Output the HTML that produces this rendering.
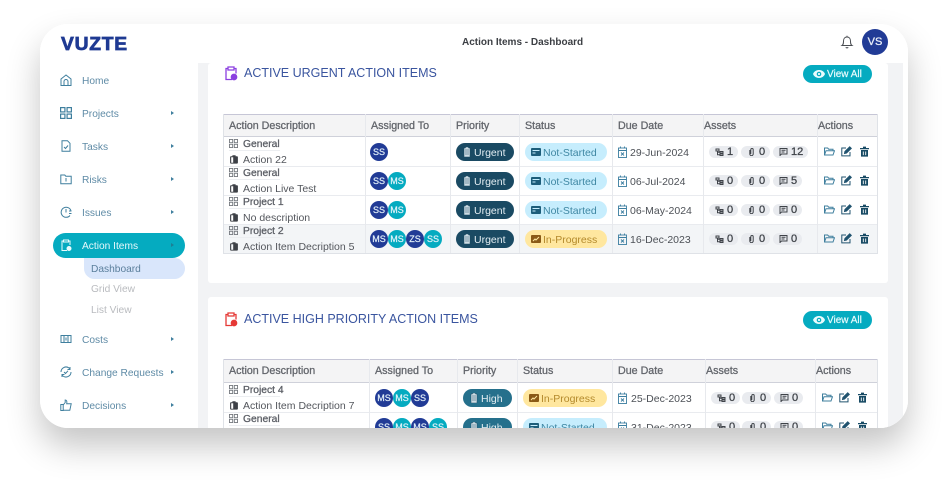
<!DOCTYPE html>
<html><head><meta charset="utf-8"><style>
*{box-sizing:border-box}
html,body{margin:0;padding:0;width:948px;height:484px;background:#fff;overflow:hidden;font-family:"Liberation Sans",sans-serif}
#f{position:absolute;left:40px;top:24px;width:868px;height:404px;border-radius:28px;overflow:hidden;background:#fff}
#s{position:absolute;left:40px;top:24px;width:868px;height:404px;border-radius:28px;box-shadow:0 18px 34px rgba(0,0,0,.23)}
.a{position:absolute;white-space:nowrap}
.n{position:absolute;left:42px;margin-top:1px;font-size:10.2px;line-height:14px;color:#5f8ba6;white-space:nowrap}
svg{position:absolute;display:block;overflow:visible}
.ni{left:20px;width:12px;height:12px;fill:none;stroke:#3f7f9e;stroke-width:1}
.ar{position:absolute;left:131px;width:0;height:0;border-left:3px solid #3f7f9e;border-top:2.5px solid transparent;border-bottom:2.5px solid transparent}
.card{position:absolute;left:168px;width:680px;background:#fff;border-radius:3px;overflow:hidden}
.h2{position:absolute;left:36px;font-size:12.5px;line-height:16px;color:#3a559f;white-space:nowrap}
.va{position:absolute;left:595px;width:69px;height:18px;border-radius:9px;background:#05abc0;color:#e8fbfd;font-size:10px;-webkit-text-stroke:.2px #e8fbfd;line-height:19px;padding-left:24px}
.va svg{left:10px;top:5px;width:12px;height:8px}
.tb{position:absolute;left:15px;width:655px;border:1px solid #dfe2e7;border-top:0}
.hd{position:absolute;left:0;top:0;width:653px;height:23px;background:#f4f4f5;border-top:1px solid #c6c6d6;border-bottom:1.5px solid #cfd1da}
.hd span{position:absolute;top:4px;font-size:10.7px;line-height:14px;-webkit-text-stroke:.3px #63666c;color:#63666c;white-space:nowrap}
.v{position:absolute;top:0;width:1px;background:#e7e9ed}
.r{position:absolute;left:0;width:653px;height:30px;border-bottom:1.5px solid #e9ebef}
.t1{position:absolute;left:19px;margin-top:1px;font-size:10.3px;line-height:13px;-webkit-text-stroke:.3px #5c5f66;color:#5c5f66;white-space:nowrap}
.t2{position:absolute;left:19px;margin-top:1px;font-size:10.5px;line-height:13px;color:#53565c;white-space:nowrap}
.ul{position:absolute;left:5px;top:13px;width:51px;height:1px;background:#eceef1}
.g{left:5px;top:2px;width:9px;height:9px;fill:none;stroke:#767a80;stroke-width:1}
.c{left:6px;top:18px;width:8px;height:9px;fill:#3d4046}
.u{position:absolute;top:6px;width:18px;height:18px;border-radius:50%;color:#e6f3fa;font-size:9px;-webkit-text-stroke:.2px #e6f3fa;line-height:18px;text-align:center}
.b{background:#213b96}.l{background:#05abc0}
.p{position:absolute;top:6px;height:18px;border-radius:9px;color:#e3eef3;font-size:10.5px;line-height:20px;white-space:nowrap}
.p svg{left:7px;top:4px;width:8px;height:10px;fill:#cfdde4}
.ns{background:#c6edfd;color:#3f87a3}.ip{background:#ffe79f;color:#b48a2c}
.p svg.st{left:6px;top:5px;width:10px;height:8px}
.dt{position:absolute;top:6px;font-size:10.5px;line-height:20px;color:#4d5157;white-space:nowrap}
.cal{top:9px;width:9px;height:12px;fill:none;stroke:#3a7d9f;stroke-width:.9}
.ch{position:absolute;top:9px;height:12px;border-radius:6px;background:#e9ebef;color:#41454b;font-size:11px;line-height:13px;white-space:nowrap}
.ch svg{top:2px;left:6px;width:9px;height:8px;fill:none;stroke:#3f4349;stroke-width:1}
.ch b{position:absolute;left:18px;top:0;font-weight:normal;-webkit-text-stroke:.3px #41454b}
.ic{top:9px;width:11px;height:11px;fill:none;stroke:#21536f;stroke-width:1}
.fo{stroke:#3f7f9e}
</style></head><body>
<svg width="0" height="0" style="position:absolute"><defs>
<symbol id="grid" viewBox="0 0 10 10"><rect x=".5" y=".5" width="3.6" height="3.6"/><rect x="5.9" y=".5" width="3.6" height="3.6"/><rect x=".5" y="5.9" width="3.6" height="3.6"/><rect x="5.9" y="5.9" width="3.6" height="3.6"/></symbol>
<symbol id="clip" viewBox="0 0 8 9"><path d="M1 1.200h1.400V.3h3.200v.9H7a.9.9 0 0 1 .9.9v5.600a.9.9 0 0 1-.9.9H1a.9.9 0 0 1-.9-.9V2.100a.9.9 0 0 1 .9-.9zM1.200 2.300V7.800h2V2.300z"/></symbol>
<symbol id="cal" viewBox="0 0 9 12"><rect x=".5" y="2" width="8" height="9.500"/><path d="M.5 4.500h8M2.500.5v2M6.500.5v2M3 6.500l3 3M6 6.500l-3 3"/></symbol>
<symbol id="sub" viewBox="0 0 8 8"><path d="M.5 1h3v2h-3zM4.500 3.500h3v1.500h-3zM4.500 6h3v1.500h-3zM2 3v3.700h2.500M2 4.200h2.500"/></symbol>
<symbol id="pin" viewBox="0 0 8 8"><path d="M2.300 2v4a1.700 1.700 0 0 0 3.400 0V1.700a1.200 1.200 0 0 0-2.400 0V6"/></symbol>
<symbol id="msg" viewBox="0 0 8 8"><path d="M.5.500h7v5.500H2L.5 7.500zM2 2.300h4M2 4h3"/></symbol>
<symbol id="fold" viewBox="0 0 11 11"><path d="M.5 9V2h3.200l1 1.200H9v1.500M.5 9l1.500-4.300h8.500L9 9z"/></symbol>
<symbol id="edit" viewBox="0 0 11 11"><path d="M9 6v3.900H.8V2H5"/><path d="M3.500 7.500l.4-2L8.700.8l1.600 1.600-4.800 4.700z" fill="#21536f"/></symbol>
<symbol id="trash" viewBox="0 0 11 11"><path d="M1 2h3V.6h3V2h3v1.300H1zM2 4h7v6.600H2z" fill="#174a64" stroke="none"/><path d="M4.300 5.500v3.600M6.700 5.500v3.600" stroke="#fff" stroke-width=".9"/></symbol>
<symbol id="urg" viewBox="0 0 8 10"><path d="M2.500 0h3v1H7v9H1V1h1.500zM2 3h4M2 5h4M2 7h4" stroke="#1a4a63" stroke-width=".5"/></symbol>
<symbol id="card" viewBox="0 0 10 8"><rect width="10" height="8" rx="1" fill="#1c5d7a"/><path d="M1.500 2.500h7M1.500 5h3" stroke="#c6edfd"/></symbol>
<symbol id="prog" viewBox="0 0 10 8"><rect width="10" height="8" rx="1" fill="#8a5a16"/><path d="M2 6l2-2 1 1 3-3" stroke="#ffe79f" fill="none"/></symbol>
<symbol id="eye" viewBox="0 0 12 8"><path d="M0 4c2-5.300 10-5.300 12 0-2 5.300-10 5.300-12 0z" fill="#e8fbfd"/><circle cx="6" cy="4" r="2.300" fill="#05abc0"/><circle cx="6" cy="4" r="1.100" fill="#e8fbfd"/></symbol>
</defs></svg>
<div id="s"></div>
<div id="f">
 <div class="a" style="left:158px;top:39px;width:710px;height:365px;background:#f2f3f5"></div>
 <div class="a" style="left:863px;top:39px;width:5px;height:365px;background:#fff"></div>
 <div class="a" style="left:0;top:0;width:868px;height:39px;background:#fff"></div>
 <div class="a" style="left:21px;top:11px;font-size:18px;line-height:18px;font-weight:bold;color:#1f3a93;letter-spacing:.7px;-webkit-text-stroke:.7px #1f3a93;transform:scaleX(1.07);transform-origin:0 50%">VUZTE</div>
 <div class="a" style="left:422px;top:12px;font-size:10px;line-height:14px;font-weight:bold;color:#3c3f44">Action Items - Dashboard</div>
 <svg style="left:801px;top:11px;width:12px;height:14px" viewBox="0 0 12 14" fill="none" stroke="#4a4d52" stroke-width="1"><path d="M1 10.500c1.500-1 1.500-2.500 1.500-4.500C2.500 3.500 4 2 6 2s3.500 1.500 3.500 4c0 2 0 3.500 1.500 4.500zM6 .8V2M4.800 12.300c.5.800 1.900.8 2.400 0"/></svg>
 <div class="a" style="left:822px;top:5px;width:26px;height:26px;border-radius:50%;background:#213b96;color:#e9eef9;font-size:11px;-webkit-text-stroke:.3px #e9eef9;line-height:27px;text-align:center">VS</div>

 <div class="a" style="left:13px;top:209px;width:132px;height:25px;border-radius:13px;background:#05abc0"></div>
 <div class="a" style="left:44px;top:234px;width:101px;height:21px;border-radius:0 11px 11px 11px;background:#d9e6fb"></div>
 <svg class="ni" style="top:50px" viewBox="0 0 12 12"><path d="M1 5l5-4 5 4v6.500H1zM4 11.500V7.500a2 2 0 0 1 4 0v4"/></svg>
 <div class="n" style="top:50px">Home</div>
 <svg class="ni" style="top:83px" viewBox="0 0 10 10"><use href="#grid"/></svg>
 <div class="n" style="top:83px">Projects</div><div class="ar" style="top:87px"></div>
 <svg class="ni" style="top:116px" viewBox="0 0 12 12"><path d="M2 .8h5.500L10 3.300v8H2zM4 7l1.500 1.500L8 5.500"/></svg>
 <div class="n" style="top:116px">Tasks</div><div class="ar" style="top:120px"></div>
 <svg class="ni" style="top:149px" viewBox="0 0 12 12"><path d="M.8 2h4l1 1.200h5.400v7.600H.8zM6 5v3.500"/></svg>
 <div class="n" style="top:149px">Risks</div><div class="ar" style="top:153px"></div>
 <svg class="ni" style="top:182px" viewBox="0 0 12 12"><path d="M10 9.500A5 5 0 1 1 11 5M6 3v3.500M9 5h2.500M9 7.500h2.500"/></svg>
 <div class="n" style="top:182px">Issues</div><div class="ar" style="top:186px"></div>
 <svg class="ni" style="top:215px;stroke:#e9fbfd" viewBox="0 0 12 12"><path d="M3.500 2H2v9.500h5M8.500 2H10v4M3.500 1h5v2h-5z"/><circle cx="9" cy="9.500" r="2" fill="#e9fbfd"/></svg>
 <div class="n" style="top:215px;color:#e6f8fb">Action Items</div><div class="ar" style="top:219px;border-left-color:#1d7f94"></div>
 <div class="n" style="left:51px;top:238px;color:#5b7f9c">Dashboard</div>
 <div class="n" style="left:51px;top:258px;color:#b9bbbf">Grid View</div>
 <div class="n" style="left:51px;top:279px;color:#b9bbbf">List View</div>
 <svg class="ni" style="top:309px" viewBox="0 0 12 12"><path d="M1 2.500h10v7H1zM4 2.500v7M8 2.500v7M6 4.500v3"/></svg>
 <div class="n" style="top:309px">Costs</div><div class="ar" style="top:313px"></div>
 <svg class="ni" style="top:342px" viewBox="0 0 12 12"><path d="M1 6a5 5 0 0 1 8-4l1 1M11 6a5 5 0 0 1-8 4L2 9M10 1v2.500H7.500M2 11V8.500h2.500M4 6l1.500 1.500L8 4.800"/></svg>
 <div class="n" style="top:342px">Change Requests</div><div class="ar" style="top:346px"></div>
 <svg class="ni" style="top:375px" viewBox="0 0 12 12"><path d="M.8 5.500h2.400v6H.8zM3.200 6l2-2.500V1c1.500 0 2 1.500 1.500 3.800h4.500L9.800 11.300H3.200"/></svg>
 <div class="n" style="top:375px">Decisions</div><div class="ar" style="top:379px"></div>

 <div class="card" style="top:39px;height:220px">
  <svg style="left:17px;top:3px;width:12px;height:14px;fill:none;stroke:#8b3fe0;stroke-width:1.300" viewBox="0 0 12 14"><path d="M3 2.500H1v11h6M9 2.500h2v5M3 1h6v3H3z"/><circle cx="9" cy="11" r="2.700" fill="#8b3fe0"/></svg>
  <div class="h2" style="top:2px">ACTIVE URGENT ACTION ITEMS</div>
  <div class="va" style="top:2px"><svg viewBox="0 0 12 8"><use href="#eye"/></svg>View All</div>
  <div class="tb" style="top:51px;height:140px">
   <div class="hd"><span style="left:5px">Action Description</span><span style="left:147px">Assigned To</span><span style="left:232px">Priority</span><span style="left:301px">Status</span><span style="left:394px">Due Date</span><span style="left:480px">Assets</span><span style="left:594px">Actions</span></div>
   <div class="r" style="top:23px">
    <svg class="g" viewBox="0 0 10 10"><use href="#grid"/></svg><div class="t1" style="top:0">General</div><div class="ul"></div>
    <svg class="c" viewBox="0 0 8 9"><use href="#clip"/></svg><div class="t2" style="top:16px">Action 22</div>
    <div class="u b" style="left:146px">SS</div>
    <div class="p" style="left:232px;width:58px;padding-left:18px;background:#1a4a63"><svg viewBox="0 0 8 10"><use href="#urg"/></svg>Urgent</div>
    <div class="p ns" style="left:301px;width:82px;padding-left:18px"><svg class="st" viewBox="0 0 10 8"><use href="#card"/></svg>Not-Started</div>
    <svg class="cal" style="left:394px" viewBox="0 0 9 12"><use href="#cal"/></svg><div class="dt" style="left:406px">29-Jun-2024</div>
    <div class="ch" style="left:485px;width:29px"><svg viewBox="0 0 8 8"><use href="#sub"/></svg><b>1</b></div>
    <div class="ch" style="left:517px;width:29px"><svg viewBox="0 0 8 8"><use href="#pin"/></svg><b>0</b></div>
    <div class="ch" style="left:549px;width:35px"><svg viewBox="0 0 8 8"><use href="#msg"/></svg><b>12</b></div>
    <svg class="ic fo" style="left:600px" viewBox="0 0 11 11"><use href="#fold"/></svg><svg class="ic" style="left:617px" viewBox="0 0 11 11"><use href="#edit"/></svg><svg class="ic" style="left:635px" viewBox="0 0 11 11"><use href="#trash"/></svg>
   </div>
   <div class="r" style="top:52px">
    <svg class="g" viewBox="0 0 10 10"><use href="#grid"/></svg><div class="t1" style="top:0">General</div><div class="ul"></div>
    <svg class="c" viewBox="0 0 8 9"><use href="#clip"/></svg><div class="t2" style="top:16px">Action Live Test</div>
    <div class="u b" style="left:146px">SS</div><div class="u l" style="left:164px">MS</div>
    <div class="p" style="left:232px;width:58px;padding-left:18px;background:#1a4a63"><svg viewBox="0 0 8 10"><use href="#urg"/></svg>Urgent</div>
    <div class="p ns" style="left:301px;width:82px;padding-left:18px"><svg class="st" viewBox="0 0 10 8"><use href="#card"/></svg>Not-Started</div>
    <svg class="cal" style="left:394px" viewBox="0 0 9 12"><use href="#cal"/></svg><div class="dt" style="left:406px">06-Jul-2024</div>
    <div class="ch" style="left:485px;width:29px"><svg viewBox="0 0 8 8"><use href="#sub"/></svg><b>0</b></div>
    <div class="ch" style="left:517px;width:29px"><svg viewBox="0 0 8 8"><use href="#pin"/></svg><b>0</b></div>
    <div class="ch" style="left:549px;width:29px"><svg viewBox="0 0 8 8"><use href="#msg"/></svg><b>5</b></div>
    <svg class="ic fo" style="left:600px" viewBox="0 0 11 11"><use href="#fold"/></svg><svg class="ic" style="left:617px" viewBox="0 0 11 11"><use href="#edit"/></svg><svg class="ic" style="left:635px" viewBox="0 0 11 11"><use href="#trash"/></svg>
   </div>
   <div class="r" style="top:81px">
    <svg class="g" viewBox="0 0 10 10"><use href="#grid"/></svg><div class="t1" style="top:0">Project 1</div><div class="ul"></div>
    <svg class="c" viewBox="0 0 8 9"><use href="#clip"/></svg><div class="t2" style="top:16px">No description</div>
    <div class="u b" style="left:146px">SS</div><div class="u l" style="left:164px">MS</div>
    <div class="p" style="left:232px;width:58px;padding-left:18px;background:#1a4a63"><svg viewBox="0 0 8 10"><use href="#urg"/></svg>Urgent</div>
    <div class="p ns" style="left:301px;width:82px;padding-left:18px"><svg class="st" viewBox="0 0 10 8"><use href="#card"/></svg>Not-Started</div>
    <svg class="cal" style="left:394px" viewBox="0 0 9 12"><use href="#cal"/></svg><div class="dt" style="left:406px">06-May-2024</div>
    <div class="ch" style="left:485px;width:29px"><svg viewBox="0 0 8 8"><use href="#sub"/></svg><b>0</b></div>
    <div class="ch" style="left:517px;width:29px"><svg viewBox="0 0 8 8"><use href="#pin"/></svg><b>0</b></div>
    <div class="ch" style="left:549px;width:29px"><svg viewBox="0 0 8 8"><use href="#msg"/></svg><b>0</b></div>
    <svg class="ic fo" style="left:600px" viewBox="0 0 11 11"><use href="#fold"/></svg><svg class="ic" style="left:617px" viewBox="0 0 11 11"><use href="#edit"/></svg><svg class="ic" style="left:635px" viewBox="0 0 11 11"><use href="#trash"/></svg>
   </div>
   <div class="r" style="top:111px;height:28px;background:#f3f5f7;border-bottom:0">
    <svg class="g" style="top:1px" viewBox="0 0 10 10"><use href="#grid"/></svg><div class="t1" style="top:-1px">Project 2</div><div class="ul" style="top:12px"></div>
    <svg class="c" style="top:17px" viewBox="0 0 8 9"><use href="#clip"/></svg><div class="t2" style="top:15px">Action Item Decription 5</div>
    <div class="u b" style="left:146px;top:5px">MS</div><div class="u l" style="left:164px;top:5px">MS</div><div class="u b" style="left:182px;top:5px">ZS</div><div class="u l" style="left:200px;top:5px">SS</div>
    <div class="p" style="left:232px;top:5px;width:58px;padding-left:18px;background:#1a4a63"><svg viewBox="0 0 8 10"><use href="#urg"/></svg>Urgent</div>
    <div class="p ip" style="left:301px;top:5px;width:82px;padding-left:18px"><svg class="st" viewBox="0 0 10 8"><use href="#prog"/></svg>In-Progress</div>
    <svg class="cal" style="left:394px;top:8px" viewBox="0 0 9 12"><use href="#cal"/></svg><div class="dt" style="left:406px;top:5px">16-Dec-2023</div>
    <div class="ch" style="left:485px;top:8px;width:29px"><svg viewBox="0 0 8 8"><use href="#sub"/></svg><b>0</b></div>
    <div class="ch" style="left:517px;top:8px;width:29px"><svg viewBox="0 0 8 8"><use href="#pin"/></svg><b>0</b></div>
    <div class="ch" style="left:549px;top:8px;width:29px"><svg viewBox="0 0 8 8"><use href="#msg"/></svg><b>0</b></div>
    <svg class="ic fo" style="left:600px;top:8px" viewBox="0 0 11 11"><use href="#fold"/></svg><svg class="ic" style="left:617px;top:8px" viewBox="0 0 11 11"><use href="#edit"/></svg><svg class="ic" style="left:635px;top:8px" viewBox="0 0 11 11"><use href="#trash"/></svg>
   </div>
   <div class="v" style="left:141px;height:139px"></div><div class="v" style="left:226px;height:139px"></div><div class="v" style="left:295px;height:139px"></div><div class="v" style="left:388px;height:139px"></div><div class="v" style="left:479px;height:139px"></div><div class="v" style="left:593px;height:139px"></div>
  </div>
 </div>

 <div class="card" style="top:273px;height:131px;border-radius:3px 3px 0 0">
  <svg style="left:17px;top:15px;width:12px;height:14px;fill:none;stroke:#e53935;stroke-width:1.300" viewBox="0 0 12 14"><path d="M3 2.500H1v11h6M9 2.500h2v5M3 1h6v3H3z"/><circle cx="9" cy="11" r="2.700" fill="#e53935"/></svg>
  <div class="h2" style="top:14px">ACTIVE HIGH PRIORITY ACTION ITEMS</div>
  <div class="va" style="top:14px"><svg viewBox="0 0 12 8"><use href="#eye"/></svg>View All</div>
  <div class="tb" style="top:62px;height:90px">
   <div class="hd" style="height:24px"><span style="left:5px">Action Description</span><span style="left:151px">Assigned To</span><span style="left:239px">Priority</span><span style="left:299px">Status</span><span style="left:394px">Due Date</span><span style="left:482px">Assets</span><span style="left:592px">Actions</span></div>
   <div class="r" style="top:24px">
    <svg class="g" viewBox="0 0 10 10"><use href="#grid"/></svg><div class="t1" style="top:0">Project 4</div><div class="ul"></div>
    <svg class="c" viewBox="0 0 8 9"><use href="#clip"/></svg><div class="t2" style="top:16px">Action Item Decription 7</div>
    <div class="u b" style="left:151px">MS</div><div class="u l" style="left:169px">MS</div><div class="u b" style="left:187px">SS</div>
    <div class="p" style="left:239px;width:49px;padding-left:18px;background:#25708c"><svg viewBox="0 0 8 10"><use href="#urg"/></svg>High</div>
    <div class="p ip" style="left:299px;width:84px;padding-left:18px"><svg class="st" viewBox="0 0 10 8"><use href="#prog"/></svg>In-Progress</div>
    <svg class="cal" style="left:394px" viewBox="0 0 9 12"><use href="#cal"/></svg><div class="dt" style="left:407px">25-Dec-2023</div>
    <div class="ch" style="left:487px;width:29px"><svg viewBox="0 0 8 8"><use href="#sub"/></svg><b>0</b></div>
    <div class="ch" style="left:518px;width:29px"><svg viewBox="0 0 8 8"><use href="#pin"/></svg><b>0</b></div>
    <div class="ch" style="left:550px;width:29px"><svg viewBox="0 0 8 8"><use href="#msg"/></svg><b>0</b></div>
    <svg class="ic fo" style="left:598px" viewBox="0 0 11 11"><use href="#fold"/></svg><svg class="ic" style="left:615px" viewBox="0 0 11 11"><use href="#edit"/></svg><svg class="ic" style="left:633px" viewBox="0 0 11 11"><use href="#trash"/></svg>
   </div>
   <div class="r" style="top:53px;border-bottom:0">
    <svg class="g" viewBox="0 0 10 10"><use href="#grid"/></svg><div class="t1" style="top:0">General</div><div class="ul"></div>
    <div class="u b" style="left:151px">SS</div><div class="u l" style="left:169px">MS</div><div class="u b" style="left:187px">MS</div><div class="u l" style="left:205px">SS</div>
    <div class="p" style="left:239px;width:49px;padding-left:18px;background:#25708c"><svg viewBox="0 0 8 10"><use href="#urg"/></svg>High</div>
    <div class="p ns" style="left:299px;width:84px;padding-left:18px"><svg class="st" viewBox="0 0 10 8"><use href="#card"/></svg>Not-Started</div>
    <svg class="cal" style="left:394px" viewBox="0 0 9 12"><use href="#cal"/></svg><div class="dt" style="left:407px">31-Dec-2023</div>
    <div class="ch" style="left:487px;width:29px"><svg viewBox="0 0 8 8"><use href="#sub"/></svg><b>0</b></div>
    <div class="ch" style="left:518px;width:29px"><svg viewBox="0 0 8 8"><use href="#pin"/></svg><b>0</b></div>
    <div class="ch" style="left:550px;width:29px"><svg viewBox="0 0 8 8"><use href="#msg"/></svg><b>0</b></div>
    <svg class="ic fo" style="left:598px" viewBox="0 0 11 11"><use href="#fold"/></svg><svg class="ic" style="left:615px" viewBox="0 0 11 11"><use href="#edit"/></svg><svg class="ic" style="left:633px" viewBox="0 0 11 11"><use href="#trash"/></svg>
   </div>
   <div class="v" style="left:145px;height:88px"></div><div class="v" style="left:233px;height:88px"></div><div class="v" style="left:293px;height:88px"></div><div class="v" style="left:388px;height:88px"></div><div class="v" style="left:481px;height:88px"></div><div class="v" style="left:591px;height:88px"></div>
  </div>
 </div>
</div>
</body></html>
